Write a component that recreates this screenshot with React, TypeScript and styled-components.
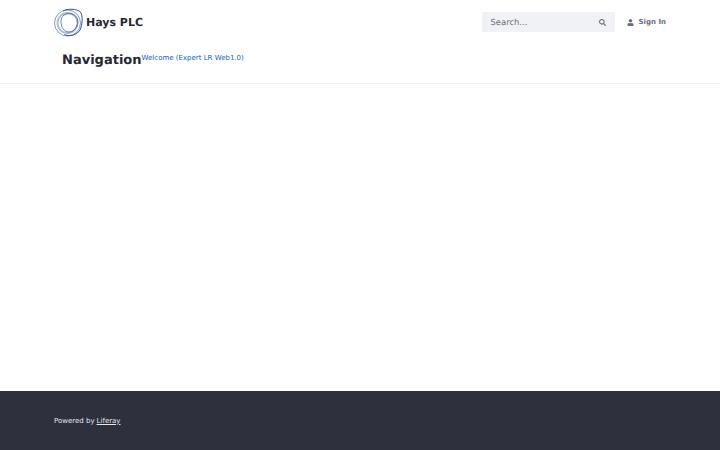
import React from 'react';
import styled, { createGlobalStyle } from 'styled-components';
import { FaSearch, FaUser } from 'react-icons/fa';

const GlobalStyle = createGlobalStyle`
  html, body {
    margin: 0;
    padding: 0;
    background: #fff;
    font-family: 'DejaVu Sans', sans-serif;
    text-rendering: geometricPrecision;
  }
`;

const Page = styled.div`
  height: 450px;
  display: flex;
  flex-direction: column;
  overflow: hidden;
  opacity: 0.999;
`;

const Header = styled.header`
  height: 84px;
  box-sizing: border-box;
  border-bottom: 1px solid #f0f1f3;
`;

const TopBar = styled.div`
  height: 44px;
  padding: 0 54px;
  display: flex;
  align-items: center;
  justify-content: space-between;
`;

const Brand = styled.div`
  display: flex;
  align-items: center;
  gap: 3px;
`;

const BrandName = styled.span`
  font-size: 11px;
  font-weight: 700;
  color: #272833;
`;

const Tools = styled.div`
  display: flex;
  align-items: center;
`;

const SearchBox = styled.div`
  width: 133px;
  height: 20px;
  box-sizing: border-box;
  padding: 0 9px 0 9px;
  background: #f1f2f5;
  border-radius: 2px;
  display: flex;
  align-items: center;
  justify-content: space-between;
  color: #6b6c7e;
  font-size: 8.4px;
`;

const SignIn = styled.a`
  margin-left: 12px;
  display: flex;
  align-items: center;
  gap: 5px;
  color: #6b6c7e;
  font-size: 7px;
  font-weight: 700;
`;

const NavRow = styled.div`
  padding: 7px 62px 0;
  display: flex;
  align-items: flex-start;
`;

const NavTitle = styled.h2`
  margin: 0;
  font-size: 13px;
  line-height: 20px;
  font-weight: 700;
  color: #272833;
`;

const NavLink = styled.a`
  font-size: 7px;
  line-height: 14px;
  color: #0b5fbf;
`;

const Main = styled.main`
  flex: 1;
`;

const Footer = styled.footer`
  height: 59px;
  box-sizing: border-box;
  padding: 0 54px;
  background: #2e303e;
  display: flex;
  align-items: center;
  color: #e7e7ed;
  font-size: 7px;
`;

const FooterLink = styled.a`
  margin-left: 2px;
  color: #e7e7ed;
  text-decoration: underline;
`;

function Logo() {
  return (
    <svg width="29" height="29" viewBox="0 0 29 29" fill="none">
      <circle cx="13.5" cy="15" r="13" stroke="#5f82b5" strokeWidth="0.8" />
      <path d="M9 3C13 0.5 23 0.5 26.5 4C29 7.5 28.5 17 26 22C23 27 15 29 10.5 26.5" stroke="#34558c" strokeWidth="1" />
      <circle cx="13.5" cy="15" r="10" stroke="#a9bbd6" strokeWidth="1.8" />
      <path d="M10 7C15 4 22 6 23.5 11C25 17 21 24 15 24C10 24 7 19 7 14C7 11 8 8.5 10 7Z" stroke="#3f629b" strokeWidth="0.8" />
    </svg>
  );
}

export default function App() {
  return (
    <Page>
      <GlobalStyle />
      <Header>
        <TopBar>
          <Brand>
            <Logo />
            <BrandName>Hays PLC</BrandName>
          </Brand>
          <Tools>
            <SearchBox>
              <span>Search...</span>
              <FaSearch size={7} />
            </SearchBox>
            <SignIn>
              <FaUser size={7} />
              Sign In
            </SignIn>
          </Tools>
        </TopBar>
        <NavRow>
          <NavTitle>Navigation</NavTitle>
          <NavLink>Welcome (Expert LR Web1.0)</NavLink>
        </NavRow>
      </Header>
      <Main />
      <Footer>
        Powered by<FooterLink>Liferay</FooterLink>
      </Footer>
    </Page>
  );
}
